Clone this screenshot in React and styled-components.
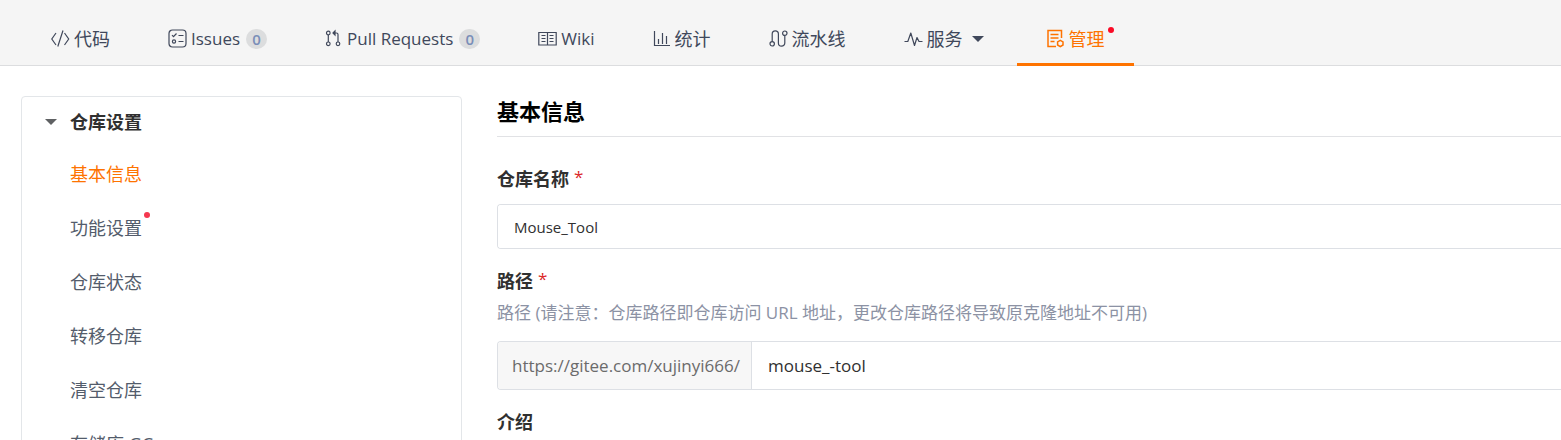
import React from "react";
import styled, { createGlobalStyle, css } from "styled-components";

const GlobalStyle = createGlobalStyle`
  *, *::before, *::after { box-sizing: border-box; }
  body {
    margin: 0;
    background: #fff;
    color: #303030;
    font: 400 17px/24px "Open Sans", "Noto Sans CJK SC", sans-serif;
  }
  h1, ul { margin: 0; padding: 0; }
  ul { list-style: none; }
`;

const Page = styled.div`
  height: 100vh;
  overflow: hidden;
`;

const Nav = styled.nav`
  display: flex;
  padding-left: 22px;
  background: #f5f5f5;
  border-bottom: 1px solid #dcdddf;
`;

const Tab = styled.a`
  display: flex;
  flex: none;
  align-items: center;
  gap: 4px;
  height: 66px;
  margin-bottom: -1px;
  padding: 18px 29px 3px;
  border-bottom: 3px solid ${(p) => (p.$active ? "#fe7300" : "transparent")};
  color: ${(p) => (p.$active ? "#fe7300" : "#40485b")};
  font-size: ${(p) => (p.$latin ? "17px" : "18px")};
  text-decoration: none;
  white-space: nowrap;
`;

const Count = styled.span`
  width: 21px;
  height: 20px;
  margin-left: 2px;
  border-radius: 10px;
  background: #dcddde;
  color: #7a8eb8;
  font-size: 15px;
  font-weight: 600;
  line-height: 20px;
  text-align: center;
`;

const Marked = styled.span`
  position: relative;
  &::after {
    content: "";
    position: absolute;
    top: ${(p) => p.$top};
    right: ${(p) => p.$right};
    width: 6px;
    height: 6px;
    border-radius: 50%;
    background: ${(p) => p.$dot};
  }
`;

const Caret = styled.span`
  flex: none;
  border: 6px solid transparent;
  border-top-color: currentColor;
  border-bottom: 0;
  ${(p) => p.$spaced && css`margin: 0 4px 0 5px;`}
`;

const Glyph = styled.svg`
  display: block;
  flex: none;
  margin-bottom: 2px;
  fill: none;
  stroke: currentColor;
  stroke-width: ${(p) => p.$weight || 1.2};
`;

const Body = styled.div`
  display: flex;
  align-items: flex-start;
  gap: 35px;
  padding: 30px 0 0 21px;
`;

const Sidebar = styled.aside`
  flex: 0 0 441px;
  border: 1px solid #e3e6e9;
  border-radius: 4px;
`;

const GroupButton = styled.button`
  display: flex;
  align-items: center;
  gap: 13px;
  width: 100%;
  height: 50px;
  padding: 0 0 0 23px;
  border: 0;
  background: none;
  color: #303030;
  font: inherit;
  font-size: 18px;
  font-weight: 700;
  & > ${Caret} { color: #5f6163; }
`;

const SideLink = styled.a`
  display: flex;
  align-items: center;
  height: 54px;
  padding-left: 48px;
  color: ${(p) => (p.$active ? "#fe7300" : "#535c6b")};
  font-size: 18px;
  text-decoration: none;
`;

const Main = styled.main`
  flex: 1;
  min-width: 0;
`;

const Title = styled.h1`
  padding-bottom: 10px;
  border-bottom: 1px solid #e1e2e5;
  color: #000;
  font-size: 22px;
  line-height: 30px;
`;

const Field = styled.div`
  margin-top: ${(p) => (p.$first ? "30px" : "20px")};
`;

const Label = styled.label`
  display: flex;
  gap: 5px;
  height: 24px;
  font-size: 18px;
  font-weight: 700;
`;

const Required = styled.span`
  color: #db2828;
  font-size: 17px;
  font-weight: 400;
  line-height: 20px;
`;

const Hint = styled.p`
  margin: 8px 0 0;
  color: #8c92a4;
  white-space: nowrap;
`;

const InputRow = styled.div`
  display: flex;
  height: ${(p) => (p.$tall ? "49px" : "45px")};
  margin-top: ${(p) => (p.$tall ? "16px" : "13px")};
  border: 1px solid #dde0e5;
  border-right: 0;
  border-radius: 4px 0 0 4px;
  overflow: hidden;
`;

const Prefix = styled.span`
  display: flex;
  align-items: center;
  flex: 0 0 254px;
  padding-left: 14px;
  border-right: 1px solid #dde0e5;
  background: #f7f7f7;
  color: #6b6b6b;
`;

const TextInput = styled.input`
  flex: 1;
  min-width: 0;
  padding: 0 16px;
  border: 0;
  outline: 0;
  background: #fff;
  color: #303030;
  font: inherit;
  font-size: ${(p) => (p.$large ? "17px" : "15px")};
`;

const CodeIcon = () => (
  <Glyph width="19" height="19" viewBox="0 0 19 19" aria-hidden="true">
    <path d="M5 4 .800 10 5 16M13.500 4l4.200 6-4.200 6M12 1.500 6.800 17.500" />
  </Glyph>
);

const IssuesIcon = () => (
  <Glyph width="19" height="19" viewBox="0 0 19 19" aria-hidden="true">
    <rect x="1" y="1" width="17" height="17" rx="3.500" />
    <path d="M4 6.200l1.500 1.500L8.500 4.500M10.500 6.500h5M10.500 12.500h5" />
    <circle cx="6" cy="12.500" r="1.600" />
  </Glyph>
);

const PullIcon = () => (
  <Glyph width="18" height="19" viewBox="0 0 18 19" aria-hidden="true">
    <circle cx="3.300" cy="4" r="1.800" />
    <circle cx="3.300" cy="14.800" r="1.800" />
    <circle cx="13" cy="14.800" r="1.800" />
    <path d="M3.300 6v7M13 13V5.500Q13 4 11.500 4H8M10 2 8 4l2 2z" />
  </Glyph>
);

const WikiIcon = () => (
  <Glyph width="19" height="19" viewBox="0 0 19 19" aria-hidden="true">
    <path d="M.800 3.500h17.400v12.500H.800zM9.500 3.500v12.500M3.500 6.500h4M3.500 9.500h4M3.500 12.500h4M11.500 6.500h4M11.500 9.500h4M11.500 12.500h4" />
  </Glyph>
);

const StatsIcon = () => (
  <Glyph width="18" height="19" viewBox="0 0 18 19" aria-hidden="true">
    <path d="M1.500 2v14.500H17M5.500 10V15M9.500 4v11M13.500 7v8" />
  </Glyph>
);

const PipelineIcon = () => (
  <Glyph width="19" height="19" viewBox="0 0 19 19" aria-hidden="true">
    <circle cx="3.200" cy="14.800" r="2.200" />
    <circle cx="15.800" cy="4.200" r="2.200" />
    <path d="M3.200 12.600V5a3.100 3.100 0 0 1 6.200 0v9a3.200 3.200 0 0 0 6.400 0V6.400" />
  </Glyph>
);

const ServiceIcon = () => (
  <Glyph width="19" height="19" viewBox="0 0 19 19" aria-hidden="true">
    <path d="M.500 12.500h3.300L6.800 4l3.700 12.500L13 8.500l2 4h3.500" strokeLinejoin="round" />
  </Glyph>
);

const ManageIcon = () => (
  <Glyph width="19" height="19" viewBox="0 0 19 19" $weight={1.5} aria-hidden="true">
    <path d="M15.500 9V1.500H2v16h8M4.500 5.500h8M4.500 9h8M4.500 12.500h4" />
    <path d="M14.300 11.300l2.700 1.600v3.100l-2.700 1.600-2.700-1.600v-3.100z" />
  </Glyph>
);

const sideItems = [
  { text: "基本信息", active: true },
  { text: "功能设置", marked: true },
  { text: "仓库状态" },
  { text: "转移仓库" },
  { text: "清空仓库" },
  { text: "存储库 GC" },
];

export default function App() {
  return (
    <Page>
      <GlobalStyle />
      <Nav>
        <Tab href="#code"><CodeIcon />代码</Tab>
        <Tab href="#issues" $latin><IssuesIcon />Issues<Count>0</Count></Tab>
        <Tab href="#pulls" $latin><PullIcon />Pull Requests<Count>0</Count></Tab>
        <Tab href="#wiki" $latin><WikiIcon />Wiki</Tab>
        <Tab href="#stats"><StatsIcon />统计</Tab>
        <Tab href="#pipeline"><PipelineIcon />流水线</Tab>
        <Tab href="#services"><ServiceIcon />服务<Caret $spaced /></Tab>
        <Tab href="#manage" $active aria-current="page">
          <ManageIcon /><Marked $top="0" $right="-9px" $dot="#fa0a26">管理</Marked>
        </Tab>
      </Nav>
      <Body>
        <Sidebar>
          <GroupButton type="button" aria-expanded="true"><Caret />仓库设置</GroupButton>
          <ul>
            {sideItems.map(({ text, active, marked }) => (
              <li key={text}>
                <SideLink href={`#${text}`} $active={active}>
                  {marked ? <Marked $top="-4px" $right="-8px" $dot="#f5384f">{text}</Marked> : text}
                </SideLink>
              </li>
            ))}
          </ul>
        </Sidebar>
        <Main>
          <Title>基本信息</Title>
          <Field $first>
            <Label htmlFor="name">仓库名称 <Required>*</Required></Label>
            <InputRow><TextInput id="name" defaultValue="Mouse_Tool" /></InputRow>
          </Field>
          <Field>
            <Label htmlFor="path">路径 <Required>*</Required></Label>
            <Hint>路径 (请注意：仓库路径即仓库访问 URL 地址，更改仓库路径将导致原克隆地址不可用)</Hint>
            <InputRow $tall>
              <Prefix>https://gitee.com/xujinyi666/</Prefix>
              <TextInput id="path" $large defaultValue="mouse_-tool" />
            </InputRow>
          </Field>
          <Field>
            <Label as="div">介绍</Label>
          </Field>
        </Main>
      </Body>
    </Page>
  );
}
